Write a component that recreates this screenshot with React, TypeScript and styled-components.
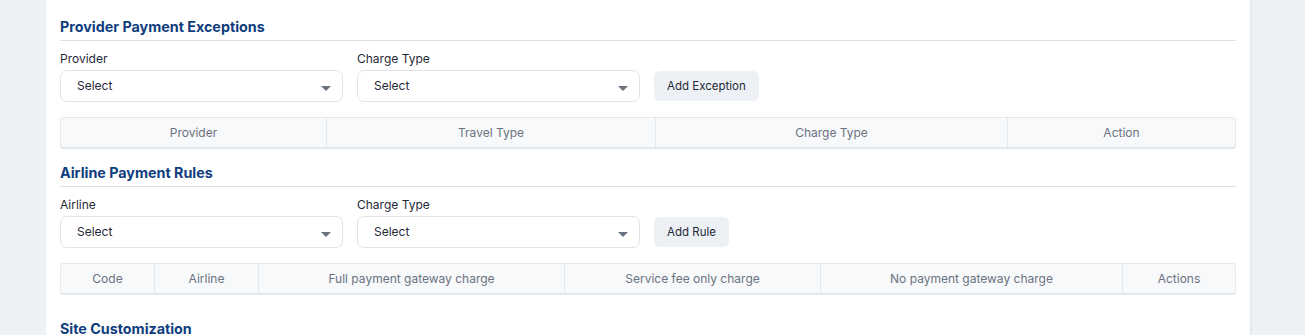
import styled, { createGlobalStyle } from 'styled-components';

const GlobalStyle = createGlobalStyle`
  body {
    margin: 0;
    background: #edf1f5;
    font-family: Inter, 'Noto Sans', sans-serif;
    color: #1f2937;
  }
`;

const Page = styled.div`
  display: flex;
  padding: 0 55px 0 46px;
  height: 335px;
  overflow: hidden;
`;

const Card = styled.div`
  flex: 1;
  background: #ffffff;
  padding: 17px 14px 0;
  box-shadow: 1px 0 2px rgba(15, 23, 42, 0.08);
  display: flex;
  flex-direction: column;
`;

const Section = styled.section<{ $gap?: number }>`
  margin-bottom: ${(p) => p.$gap ?? 14}px;
`;

const Heading = styled.h2<{ $line?: boolean }>`
  margin: 0;
  font-size: 14.3px;
  line-height: 20px;
  font-weight: 700;
  color: #0f3d7d;
  padding-bottom: 3px;
  border-bottom: 1px solid ${(p) => (p.$line === false ? 'transparent' : '#dcdfe4')};
`;

const FormRow = styled.div`
  display: flex;
  align-items: flex-end;
  gap: 14px;
  margin-top: 10px;
`;

const Field = styled.div`
  width: 283px;
  display: flex;
  flex-direction: column;
  gap: 3px;
`;

const Label = styled.label`
  font-size: 12px;
  line-height: 16px;
  color: #1f2937;
`;

const SelectBox = styled.div`
  height: 32px;
  box-sizing: border-box;
  border: 1px solid #dfe4eb;
  border-radius: 7px;
  display: flex;
  align-items: center;
  justify-content: space-between;
  padding: 0 11px 2px 16px;
  font-size: 12px;
  color: #1f2937;
`;

const Caret = styled.span`
  width: 0;
  height: 0;
  border-left: 5px solid transparent;
  border-right: 5px solid transparent;
  border-top: 5px solid #6b7280;
  margin-top: 6px;
`;

const Button = styled.button`
  height: 30px;
  margin-bottom: 1px;
  padding: 0 13px;
  border: none;
  border-radius: 6px;
  background: #edf1f5;
  font-family: inherit;
  font-size: 11.5px;
  color: #1f2937;
  cursor: pointer;
`;

const Table = styled.div<{ $cols: string }>`
  margin-top: 15px;
  display: grid;
  grid-template-columns: ${(p) => p.$cols};
  background: #f7f9fb;
  border: 1px solid #e3e8ef;
  border-bottom-width: 2px;
  border-radius: 4px;
`;

const HeadCell = styled.div`
  height: 29px;
  display: flex;
  align-items: center;
  justify-content: center;
  font-size: 12px;
  color: #6b7280;
  border-left: 1px solid #e3e8ef;
  &:first-child {
    border-left: none;
  }
`;

type Rule = {
  title: string;
  first: string;
  button: string;
  cols: string;
  heads: string[];
  gap?: number;
};

const sections: Rule[] = [
  {
    title: 'Provider Payment Exceptions',
    first: 'Provider',
    button: 'Add Exception',
    cols: '265px 329px 352px 1fr',
    heads: ['Provider', 'Travel Type', 'Charge Type', 'Action'],
  },
  {
    title: 'Airline Payment Rules',
    first: 'Airline',
    button: 'Add Rule',
    cols: '93px 104px 306px 256px 302px 1fr',
    heads: [
      'Code',
      'Airline',
      'Full payment gateway charge',
      'Service fee only charge',
      'No payment gateway charge',
      'Actions',
    ],
    gap: 24,
  },
];

const App = () => {
  return (
    <>
      <GlobalStyle />
      <Page>
        <Card>
          {sections.map((s) => (
            <Section key={s.title} $gap={s.gap}>
              <Heading>{s.title}</Heading>
              <FormRow>
                <Field>
                  <Label>{s.first}</Label>
                  <SelectBox>
                    Select
                    <Caret />
                  </SelectBox>
                </Field>
                <Field>
                  <Label>Charge Type</Label>
                  <SelectBox>
                    Select
                    <Caret />
                  </SelectBox>
                </Field>
                <Button>{s.button}</Button>
              </FormRow>
              <Table $cols={s.cols}>
                {s.heads.map((h) => (
                  <HeadCell key={h}>{h}</HeadCell>
                ))}
              </Table>
            </Section>
          ))}
          <Heading as="h3" $line={false}>
            Site Customization
          </Heading>
        </Card>
      </Page>
    </>
  );
};

export default App;
